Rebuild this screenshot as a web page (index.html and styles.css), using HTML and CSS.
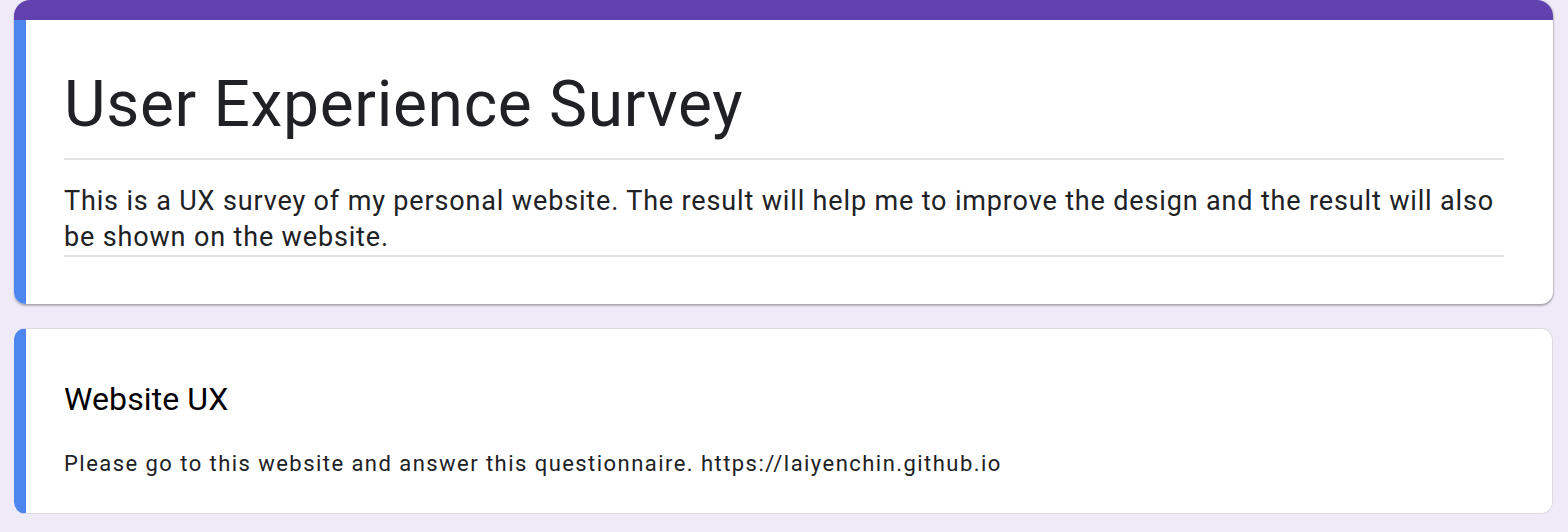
FILE: index.html
```html
<!DOCTYPE html>
<html lang="en">
<head>
<meta charset="utf-8">
<title>User Experience Survey</title>
<link rel="stylesheet" href="styles.css">
</head>
<body>
<main class="form">
  <section class="card card-header">
    <div class="theme-band"></div>
    <div class="card-body header-body">
      <h1 class="form-title">User Experience Survey</h1>
      <p class="form-desc">This is a UX survey of my personal website. The result will help me to improve the design and the result will also be shown on the website.</p>
    </div>
  </section>
  <section class="card card-section">
    <h2 class="section-title">Website UX</h2>
    <p class="section-desc">Please go to this website and answer this questionnaire. https://laiyenchin.github.io</p>
  </section>
</main>
</body>
</html>
```
FILE: styles.css
```css
html, body {
  margin: 0;
  padding: 0;
  background: #eeeaf7;
}
body {
  font-family: Roboto, "Liberation Sans", Arial, sans-serif;
  color: #202124;
}
.form {
  padding: 0 15px 0 14px;
  display: flex;
  flex-direction: column;
  gap: 24px;
}
.card {
  background: #fff;
  overflow: hidden;
}
.card-header {
  border-radius: 16px 16px 12px 12px;
  box-shadow: 0 2px 2px rgba(60, 64, 67, 0.35), 1px 0 2px rgba(60, 64, 67, 0.2);
}
.theme-band {
  height: 20px;
  background: #6041ae;
}
.header-body {
  border-left: 12px solid #4d86ee;
  padding: 46px 49px 47px 38px;
}
.form-title {
  margin: 0;
  font-weight: 400;
  font-size: 64px;
  line-height: 77px;
  letter-spacing: 0.7px;
  padding-bottom: 15px;
  border-bottom: 2px solid #e3e3e3;
}
.form-desc {
  margin: 23px 0 0;
  font-size: 27px;
  line-height: 36px;
  letter-spacing: 0.85px;
  border-bottom: 2px solid #e3e3e3;
}
.card-section {
  border: 1px solid #dadce0;
  border-left: 12px solid #4d86ee;
  border-radius: 12px;
  padding: 50px 49px 34px 38px;
}
.section-title {
  margin: 0;
  font-weight: 400;
  font-size: 32px;
  line-height: 40px;
  letter-spacing: 0.1px;
  color: #000;
}
.section-desc {
  margin: 30px 0 0;
  font-size: 22px;
  line-height: 30px;
  letter-spacing: 1.45px;
}
```
